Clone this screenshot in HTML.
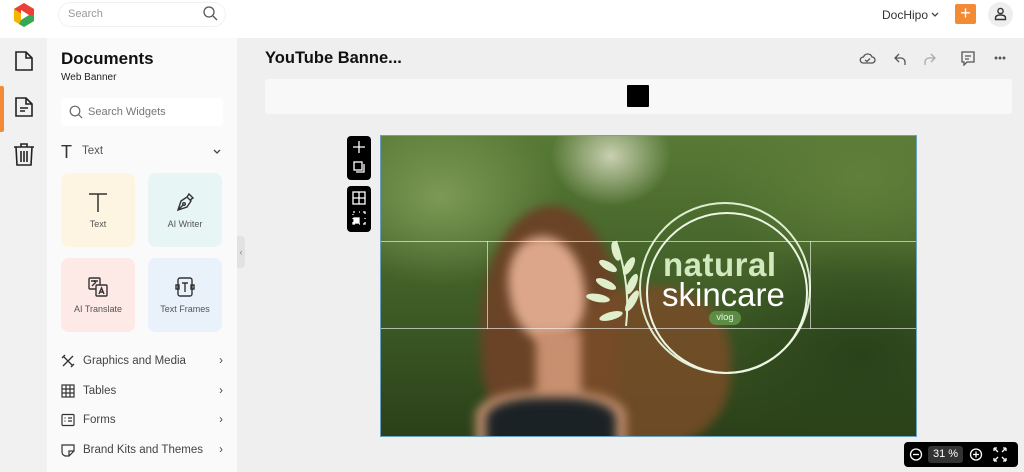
<!DOCTYPE html>
<html><head><style>
*{margin:0;padding:0;box-sizing:border-box}
body{width:1024px;height:472px;overflow:hidden;background:#efefef;font-family:"Liberation Sans",sans-serif;position:relative;color:#222}
.a{position:absolute}
svg{display:block}
.card{position:absolute;width:74px;height:74px;border-radius:8px;font-size:9px;color:#555;text-align:center}
.card svg{margin:18px auto 6px}
.row{position:absolute;left:61px;width:162px;font-size:11.5px;color:#444;display:flex;align-items:center}
.row span{margin-left:8px;flex:1}
.bl{filter:blur(5px)}
</style></head><body>
<div class="a" style="left:0;top:0;width:1024px;height:38px;background:#fff"></div>
<svg class="a" style="left:11px;top:2px" width="26" height="26" viewBox="0 0 26 26">
<path d="M13 1 L23 7 L23 19 L13 25 L3 19 L3 7Z" fill="#f4b400"/>
<path d="M13 1 L23 7 L23 13 L13 13 L3 7Z" fill="#e94235"/>
<path d="M23 13 L23 19 L13 25 L8 22 L13 13Z" fill="#34a853"/>
<path d="M10 8 L18 13 L10 18Z" fill="#fff"/></svg>
<div class="a" style="left:58px;top:2px;width:168px;height:25px;border-radius:13px;background:#fff;border:1px solid #f1f1f1"></div>
<div class="a" style="left:68px;top:8px;font-size:11px;color:#999">Search</div>
<svg class="a" style="left:203px;top:6px" width="15" height="15" viewBox="0 0 15 15" fill="none" stroke="#555" stroke-width="1.3"><circle cx="6" cy="6" r="5"/><path d="M10 10l4 4"/></svg>
<div class="a" style="left:882px;top:8px;font-size:12px;color:#333">DocHipo</div>
<svg class="a" style="left:931px;top:12px" width="8" height="6" viewBox="0 0 8 6" fill="none" stroke="#444" stroke-width="1.3"><path d="M1 1l3 3 3-3"/></svg>
<div class="a" style="left:955px;top:4px;width:21px;height:20px;background:#f28a36;border-radius:2px;color:#fff;font-size:18px;line-height:19px;text-align:center">+</div>
<div class="a" style="left:988px;top:2px;width:25px;height:25px;border-radius:50%;background:#eee"></div>
<svg class="a" style="left:994px;top:7px" width="13" height="14" viewBox="0 0 13 14" fill="none" stroke="#333" stroke-width="1.4"><circle cx="6.5" cy="4" r="2.6"/><path d="M1.5 12.5v-1.5c0-2 2-3 5-3s5 1 5 3v1.5z"/></svg>
<div class="a" style="left:0;top:38px;width:47px;height:434px;background:#f1f1f1"></div>
<div class="a" style="left:0;top:86px;width:4px;height:46px;background:#f28a36;border-radius:0 2px 2px 0"></div>
<svg class="a" style="left:14px;top:50px" width="20" height="22" viewBox="0 0 20 22" fill="none" stroke="#222" stroke-width="1.6"><path d="M2 2h10l6 6v12H2z M12 2v6h6"/></svg>
<svg class="a" style="left:14px;top:96px" width="20" height="22" viewBox="0 0 20 22" fill="none" stroke="#222" stroke-width="1.6"><path d="M2 2h10l6 6v12H2z M12 2v6h6 M6 12h8 M6 15h5"/></svg>
<svg class="a" style="left:13px;top:142px" width="22" height="24" viewBox="0 0 22 24" fill="none" stroke="#222" stroke-width="1.6"><path d="M1 5h20 M8 5V2h6v3 M3 5l1 18h14l1-18 M8 9v11 M11 9v11 M14 9v11"/></svg>
<div class="a" style="left:47px;top:38px;width:190px;height:434px;background:#fafafa"></div>
<div class="a" style="left:61px;top:49px;font-size:17px;font-weight:bold;color:#111">Documents</div>
<div class="a" style="left:61px;top:72px;font-size:10px;color:#222">Web Banner</div>
<div class="a" style="left:61px;top:98px;width:162px;height:28px;background:#fff;border-radius:4px"></div>
<svg class="a" style="left:69px;top:105px" width="14" height="14" viewBox="0 0 14 14" fill="none" stroke="#666" stroke-width="1.2"><circle cx="6" cy="6" r="4.8"/><path d="M9.5 9.5l3.5 3.5"/></svg>
<div class="a" style="left:88px;top:106px;font-size:11px;color:#777">Search Widgets</div>
<div class="a" style="left:61px;top:142px;font-size:18px;color:#333;font-weight:300">T</div>
<div class="a" style="left:82px;top:145px;font-size:11.5px;color:#555">Text</div>
<svg class="a" style="left:213px;top:149px" width="8" height="6" viewBox="0 0 8 6" fill="none" stroke="#444" stroke-width="1.3"><path d="M1 1l3 3 3-3"/></svg>
<div class="card" style="left:61px;top:173px;background:#fdf4e1"><svg width="22" height="22" viewBox="0 0 22 22" fill="none" stroke="#333" stroke-width="1.5"><path d="M2 3h18 M11 3v18"/></svg>Text</div>
<div class="card" style="left:148px;top:173px;background:#e8f5f5"><svg width="22" height="22" viewBox="0 0 22 22" fill="none" stroke="#333" stroke-width="1.4"><path d="M4 19l3-9 6-4 4 4-4 6z M4 19l5-5 M13 6l2-3 4 4-3 2"/><circle cx="10" cy="13" r="1.3"/></svg>AI Writer</div>
<div class="card" style="left:61px;top:258px;background:#fde9e6"><svg width="22" height="22" viewBox="0 0 22 22" fill="none" stroke="#333" stroke-width="1.4"><rect x="2" y="2" width="11" height="11" rx="1"/><rect x="9" y="9" width="11" height="11" rx="1" fill="#fde9e6"/><path d="M12 18l2.5-6 2.5 6 M13 16h3 M4 5h7 M7.5 4v2 M5 10l4-4"/></svg>AI Translate</div>
<div class="card" style="left:148px;top:258px;background:#e9f1fb"><svg width="22" height="22" viewBox="0 0 22 22" fill="none" stroke="#333" stroke-width="1.4"><rect x="4" y="2" width="14" height="18" rx="2"/><path d="M8 7h6 M11 7v9 M2 9h3v4H2z M17 9h3v4h-3z"/></svg>Text Frames</div>
<div class="row" style="top:354px"><svg width="14" height="14" viewBox="0 0 14 14" fill="none" stroke="#333" stroke-width="1.3"><path d="M2 2l10 10 M12 2L2 12 M1 4l3-3 M10 13l3-3"/></svg><span>Graphics and Media</span>›</div>
<div class="row" style="top:384px"><svg width="14" height="14" viewBox="0 0 14 14" fill="none" stroke="#333" stroke-width="1.2"><rect x="1" y="1" width="12" height="12"/><path d="M1 5h12 M1 9h12 M5 1v12 M9 1v12"/></svg><span>Tables</span>›</div>
<div class="row" style="top:413px"><svg width="14" height="14" viewBox="0 0 14 14" fill="none" stroke="#333" stroke-width="1.2"><rect x="1" y="1.5" width="12" height="11" rx="1"/><path d="M3.5 5h1 M3.5 8h1 M7 5h4 M7 8h4"/></svg><span>Forms</span>›</div>
<div class="row" style="top:443px"><svg width="14" height="14" viewBox="0 0 14 14" fill="none" stroke="#333" stroke-width="1.2"><path d="M1 2h12v6l-5 5H5a4 4 0 01-4-4z M8 13V8h5"/></svg><span>Brand Kits and Themes</span>›</div>
<div class="a" style="left:237px;top:236px;width:8px;height:32px;background:#e2e2e2;border-radius:0 4px 4px 0;font-size:9px;color:#888;line-height:32px;text-align:center">‹</div>
<div class="a" style="left:265px;top:49px;font-size:16.5px;font-weight:bold;color:#111">YouTube Banne...</div>
<svg class="a" style="left:859px;top:50px" width="160" height="16" viewBox="0 0 160 16" fill="none" stroke="#555" stroke-width="1.3">
<path d="M4 13h9a3 3 0 000-6 4.5 4.5 0 00-8.5 0A3 3 0 004 13z M6 10l2 1.5 3-3"/>
<path d="M40 4l-4 4 4 4 M36 8h6a4 4 0 014 4v3" />
<path d="M72 4l4 4-4 4 M76 8h-6a4 4 0 00-4 4v3" stroke="#aaa"/>
<path d="M103 2h12v10h-7l-3 3v-3h-2z M106 6h6 M106 9h4"/>
<circle cx="137" cy="8" r=".8" fill="#555"/><circle cx="141" cy="8" r=".8" fill="#555"/><circle cx="145" cy="8" r=".8" fill="#555"/></svg>
<div class="a" style="left:265px;top:79px;width:747px;height:35px;background:#f8f8f8;border-radius:3px"></div>
<div class="a" style="left:627px;top:85px;width:22px;height:22px;background:#000;border-radius:1px"></div>
<div class="a" style="left:347px;top:136px;width:24px;height:44px;background:#000;border-radius:4px"></div>
<div class="a" style="left:347px;top:186px;width:24px;height:46px;background:#000;border-radius:4px"></div>
<svg class="a" style="left:347px;top:136px" width="24" height="96" viewBox="0 0 24 96" fill="none" stroke="#fff" stroke-width="1.3">
<path d="M12 5v12 M6 11h12"/><rect x="7" y="26" width="8" height="8"/><path d="M9 36h8v-8"/>
<rect x="6" y="56" width="12" height="12"/><path d="M6 62h12 M12 56v12"/>
<path d="M6 78v1 M6 82v1 M6 86v2h2 M12 88h1 M16 88h2v-2 M18 82v1 M18 78v-2h-2 M12 76h1 M8 76h-2" /><rect x="7" y="82" width="5" height="5" fill="#fff"/></svg>
<div class="a" style="left:380px;top:135px;width:537px;height:302px;overflow:hidden;border:1px solid #6aa0c0;background:
radial-gradient(ellipse 60px 50px at 230px 20px,#c8d0b0,transparent),
radial-gradient(ellipse 120px 90px at 60px 60px,#7d9a55,transparent),
radial-gradient(ellipse 160px 120px at 480px 220px,#2a421a,transparent),
radial-gradient(ellipse 150px 100px at 480px 40px,#5f7f3a,transparent),
linear-gradient(180deg,#587a36,#3d5a25 60%,#2b4019)">
 <div class="a bl" style="left:100px;top:70px;width:140px;height:240px;border-radius:50% 50% 40% 40%;background:#6a4326"></div>
 <div class="a bl" style="left:190px;top:150px;width:160px;height:160px;border-radius:45%;background:rgba(120,76,40,.85)"></div>
 <div class="a bl" style="left:128px;top:100px;width:75px;height:105px;border-radius:48% 48% 45% 45%;background:#dca68a;transform:rotate(-10deg)"></div>
 <div class="a bl" style="left:155px;top:195px;width:45px;height:70px;background:#c99070"></div>
 <div class="a bl" style="left:95px;top:255px;width:150px;height:60px;border-radius:40% 40% 0 0;background:#c4906e"></div>
 <div class="a bl" style="left:105px;top:262px;width:130px;height:50px;border-radius:40% 40% 0 0;background:#1b2226"></div>
 <div class="a" style="left:258px;top:66px;width:172px;height:172px;border-radius:50%;border:2px solid #dfeecf"></div>
 <div class="a" style="left:265px;top:76px;width:162px;height:162px;border-radius:50%;border:2px solid #eef6e6"></div>
 <svg class="a" style="left:205px;top:100px" width="70" height="95" viewBox="0 0 70 95" fill="#dfeecb">
 <path d="M40 90 Q45 50 30 5" stroke="#dfeecb" stroke-width="2" fill="none"/>
 <ellipse cx="30" cy="15" rx="4" ry="10" transform="rotate(-15 30 15)"/><ellipse cx="22" cy="30" rx="10" ry="4" transform="rotate(30 22 30)"/><ellipse cx="43" cy="30" rx="4" ry="10" transform="rotate(30 43 30)"/><ellipse cx="20" cy="48" rx="11" ry="4" transform="rotate(25 20 48)"/><ellipse cx="46" cy="48" rx="4" ry="11" transform="rotate(25 46 48)"/><ellipse cx="12" cy="62" rx="12" ry="4" transform="rotate(10 12 62)"/><ellipse cx="46" cy="65" rx="4" ry="12" transform="rotate(30 46 65)"/><ellipse cx="25" cy="80" rx="12" ry="4" transform="rotate(-15 25 80)"/></svg>
 <div class="a" style="left:282px;top:110px;font-size:33px;font-weight:bold;color:#d4e8c0;letter-spacing:.5px">natural</div>
 <div class="a" style="left:281px;top:140px;font-size:33px;color:#fff">skincare</div>
 <div class="a" style="left:328px;top:175px;width:32px;height:14px;border-radius:7px;background:#5d8d45;color:#e8f3df;font-size:9.5px;text-align:center;line-height:14px">vlog</div>
 <div class="a" style="left:0;top:105px;width:537px;height:1px;background:rgba(255,255,255,.6)"></div>
 <div class="a" style="left:0;top:192px;width:537px;height:1px;background:rgba(255,255,255,.6)"></div>
 <div class="a" style="left:106px;top:105px;width:1px;height:88px;background:rgba(255,255,255,.6)"></div>
 <div class="a" style="left:429px;top:105px;width:1px;height:88px;background:rgba(255,255,255,.6)"></div>
</div>
<div class="a" style="left:904px;top:442px;width:114px;height:25px;background:#000;border-radius:4px"></div>
<svg class="a" style="left:904px;top:442px" width="114" height="25" viewBox="0 0 114 25" fill="none" stroke="#fff" stroke-width="1.3">
<circle cx="12" cy="12.5" r="5.5"/><path d="M9 12.5h6"/><circle cx="72" cy="12.5" r="5.5"/><path d="M69 12.5h6 M72 9.5v6"/>
<path d="M90 6l4 4 M90 6h3 M90 6v3 M102 6l-4 4 M102 6h-3 M102 6v3 M90 19l4-4 M90 19h3 M90 19v-3 M102 19l-4-4 M102 19h-3 M102 19v-3"/></svg>
<div class="a" style="left:928px;top:446px;width:35px;height:17px;background:#333;border-radius:3px;color:#fff;font-size:11px;text-align:center;line-height:17px">31 %</div>
</body></html>
